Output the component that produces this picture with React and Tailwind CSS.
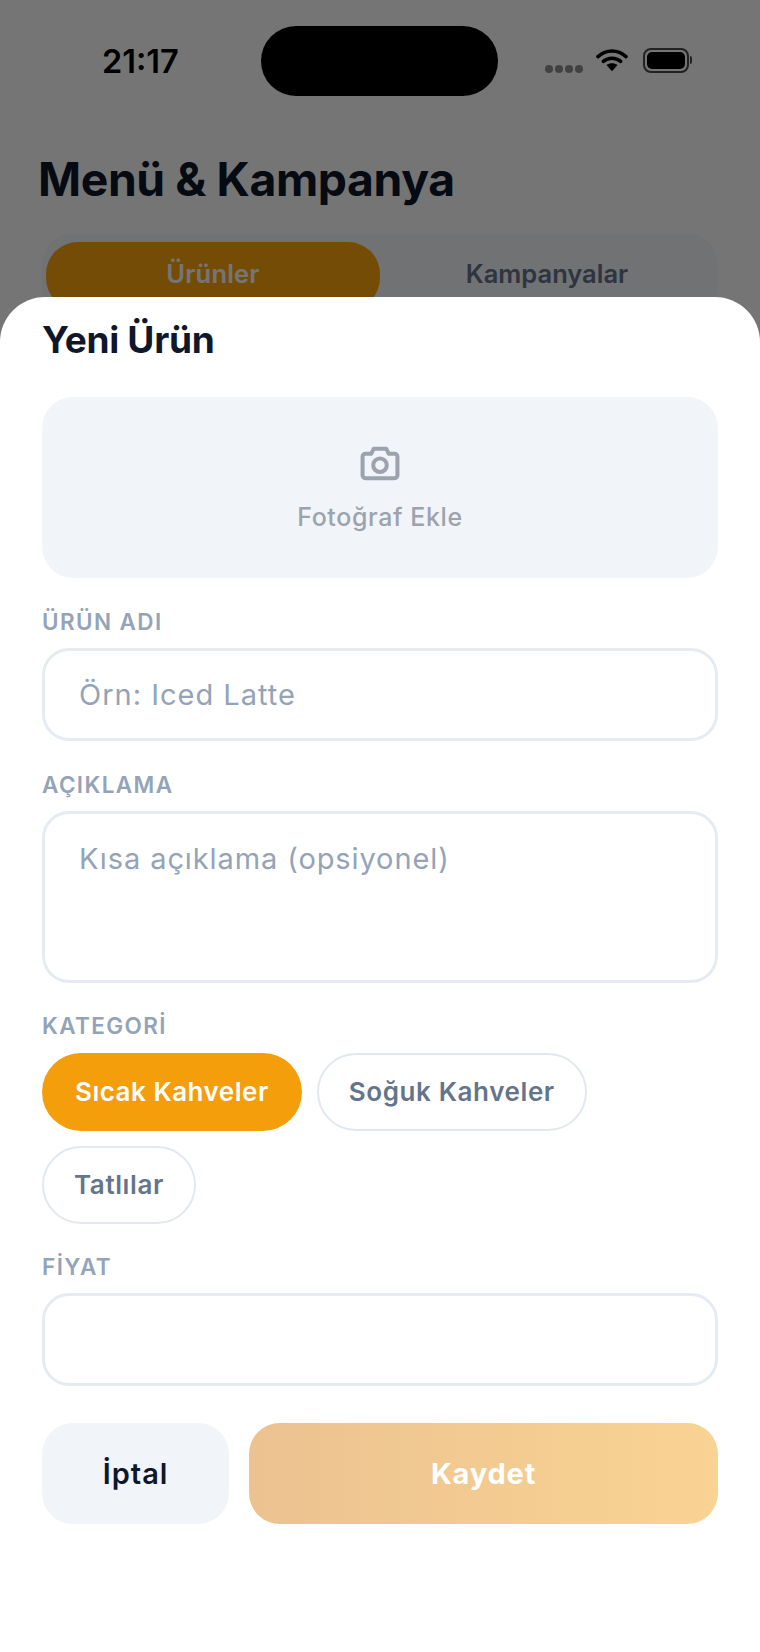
import React from 'react';

const font = { fontFamily: 'Inter, "Liberation Sans", sans-serif' };

const Label = ({ children }) => (
  <div className="text-[22.5px] leading-[26px] font-semibold tracking-[1.4px] text-[#94a3b8]">{children}</div>
);

const Chip = ({ children, active }) => (
  <div
    className={
      active
        ? 'h-[78px] px-[33px] pb-[1px] flex items-center rounded-full bg-[#f59e0b] text-white text-[26px] font-semibold tracking-[0.5px]'
        : 'h-[78px] px-[30px] pb-[1px] flex items-center rounded-full bg-white border-2 border-[#e2e8f0] text-[#64748b] text-[26px] font-semibold tracking-[0.6px]'
    }
  >
    {children}
  </div>
);

const StatusBar = () => (
  <div className="h-[122px] flex items-start">
    <div className="w-[261px] pt-[38px] pl-[102px] text-[32.5px] leading-[48px] font-semibold text-black">21:17</div>
    <div className="mt-[26px] w-[237px] h-[70px] rounded-[35px] bg-black" />
    <div className="ml-[47px] mt-[47px] flex items-center">
      <div className="flex gap-[2.5px] mt-[18px]">
        <span className="w-[7.5px] h-[7.5px] rounded-full bg-[#8f8f8f]" />
        <span className="w-[7.5px] h-[7.5px] rounded-full bg-[#8f8f8f]" />
        <span className="w-[7.5px] h-[7.5px] rounded-full bg-[#8f8f8f]" />
        <span className="w-[7.5px] h-[7.5px] rounded-full bg-[#8f8f8f]" />
      </div>
      <svg className="ml-[13px]" width="32" height="26" viewBox="0 0 33 24" fill="none">
        <path d="M2 8.5C10.5 .8 22.5 .8 31 8.5" stroke="#000" strokeWidth="3.6" strokeLinecap="round" />
        <path d="M7.5 13.5C12.8 9 20.2 9 25.5 13.5" stroke="#000" strokeWidth="3.6" strokeLinecap="round" />
        <path d="M16.5 23.5L10.8 17.2C14.2 14.6 18.8 14.6 22.2 17.2Z" fill="#000" />
      </svg>
      <div className="ml-[15px] w-[46px] h-[25px] rounded-[8px] border-2 border-[#4a4a4a] p-[2px]">
        <div className="w-full h-full rounded-[5px] bg-black" />
      </div>
      <div className="ml-[1px] w-[2px] h-[8px] rounded-r-full bg-[#4a4a4a]" />
    </div>
  </div>
);

export default function App() {
  return (
    <div className="relative w-[760px] h-[1652px] overflow-hidden bg-white" style={font}>
      <StatusBar />
      <div className="pl-[38px] mt-[27px] text-[46.3px] leading-[60px] font-bold tracking-[-0.4px] text-[#0f172a]">
        Menü &amp; Kampanya
      </div>
      <div className="mx-[42px] mt-[25px] h-[84px] py-[8px] px-[4px] flex rounded-[30px] bg-[#f6f8fb]">
        <div className="w-[334px] h-[68px] pb-[3px] flex items-center justify-center rounded-[32px] bg-[#ffa50c] text-white text-[25.5px] font-semibold tracking-[0.2px]">
          Ürünler
        </div>
        <div className="flex-1 pb-[3px] flex items-center justify-center text-[#64748b] text-[25.5px] font-semibold">
          Kampanyalar
        </div>
      </div>

      {/* dimmed backdrop */}
      <div className="absolute inset-0 bg-black/[0.54]" />

      {/* bottom sheet */}
      <div className="absolute left-0 right-0 top-[297px] bottom-0 bg-white rounded-t-[45px] px-[42px]">
        <div className="mt-[20px] text-[37px] leading-[46px] font-bold tracking-[-0.3px] text-[#0f172a]">Yeni Ürün</div>

        <div className="mt-[34px] h-[181px] rounded-[31px] bg-[#f1f5f9] flex flex-col items-center justify-center">
          <svg className="mt-[-2px]" width="44" height="44" viewBox="0 0 24 24" fill="none" stroke="#9ca3af" strokeWidth="2.2" strokeLinecap="round" strokeLinejoin="round">
            <path d="M4 7h3.2l1.4-2.8h6.8L16.8 7H20a1.5 1.5 0 0 1 1.5 1.5v10.3a1.5 1.5 0 0 1-1.5 1.5H4a1.5 1.5 0 0 1-1.5-1.5V8.5A1.5 1.5 0 0 1 4 7z" />
            <circle cx="12" cy="13.2" r="3.7" />
          </svg>
          <div className="mt-[17px] text-[25px] leading-[30px] font-medium tracking-[0.6px] text-[#9ca3af]">Fotoğraf Ekle</div>
        </div>

        <div className="mt-[31px]"><Label>ÜRÜN ADI</Label></div>
        <div className="mt-[13px] h-[93px] rounded-[27px] border-[3px] border-[#e6ebf2] flex items-center pl-[34px] pt-[1px] text-[29px] tracking-[1px] text-[#94a3b8]">
          Örn: Iced Latte
        </div>

        <div className="mt-[31px]"><Label>AÇIKLAMA</Label></div>
        <div className="mt-[13px] h-[172px] rounded-[27px] border-[3px] border-[#e6ebf2] pl-[34px] pt-[28px] text-[29px] leading-[34px] tracking-[0.9px] text-[#94a3b8]">
          Kısa açıklama (opsiyonel)
        </div>

        <div className="mt-[30px]"><Label>KATEGORİ</Label></div>
        <div className="mt-[14px] flex flex-wrap gap-x-[15px] gap-y-[15px]">
          <Chip active>Sıcak Kahveler</Chip>
          <Chip>Soğuk Kahveler</Chip>
          <Chip>Tatlılar</Chip>
        </div>

        <div className="mt-[30px]"><Label>FİYAT</Label></div>
        <div className="mt-[13px] h-[93px] rounded-[27px] border-[3px] border-[#e6ebf2]" />

        <div className="mt-[37px] flex gap-[20px]">
          <div className="w-[187px] h-[101px] rounded-[31px] bg-[#f1f5f9] flex items-center justify-center text-[29px] font-semibold tracking-[1px] text-[#0f172a]">
            İptal
          </div>
          <div className="flex-1 h-[101px] rounded-[31px] bg-gradient-to-r from-[#ebc290] to-[#f9d393] flex items-center justify-center text-[29px] font-bold tracking-[0.8px] text-white">
            Kaydet
          </div>
        </div>
      </div>
    </div>
  );
}
